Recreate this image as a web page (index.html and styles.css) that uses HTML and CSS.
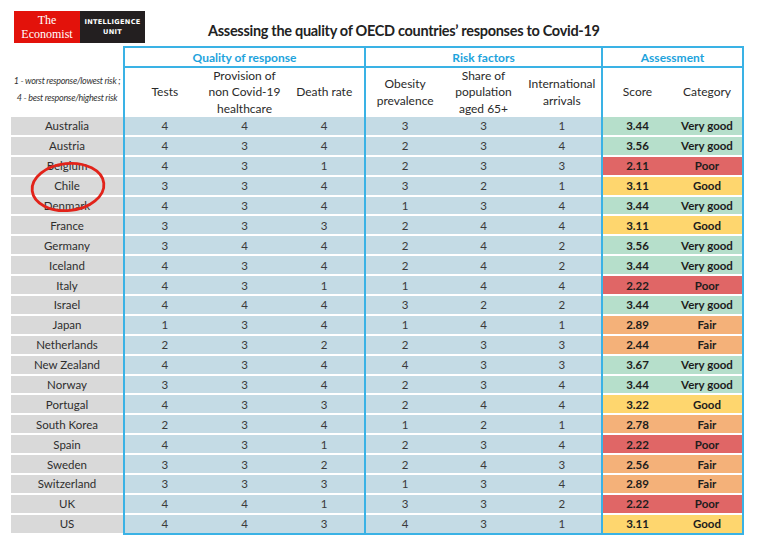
FILE: index.html
```html
<!DOCTYPE html>
<html>
<head>
<meta charset="utf-8">
<link rel="stylesheet" href="styles.css">
</head>
<body>
<div class="page">
  <div class="top">
    <div class="logo">
      <div class="logo-red"><span>The</span><span>Economist</span></div>
      <div class="logo-black"><span>INTELLIGENCE</span><span>UNIT</span></div>
    </div>
    <h1 class="title">Assessing the quality of OECD countries’ responses to Covid-19</h1>
  </div>

  <div class="table">
    <div class="labels">
      <div class="legend">
        <p>1 - worst response/lowest risk ;</p>
        <p>4 - best response/highest risk</p>
      </div>
      <div class="rows">
        <div class="row lab">Australia</div>
        <div class="row lab">Austria</div>
        <div class="row lab">Belgium</div>
        <div class="row lab">Chile</div>
        <div class="row lab">Denmark</div>
        <div class="row lab">France</div>
        <div class="row lab">Germany</div>
        <div class="row lab">Iceland</div>
        <div class="row lab">Italy</div>
        <div class="row lab">Israel</div>
        <div class="row lab">Japan</div>
        <div class="row lab">Netherlands</div>
        <div class="row lab">New Zealand</div>
        <div class="row lab">Norway</div>
        <div class="row lab">Portugal</div>
        <div class="row lab">South Korea</div>
        <div class="row lab">Spain</div>
        <div class="row lab">Sweden</div>
        <div class="row lab">Switzerland</div>
        <div class="row lab">UK</div>
        <div class="row lab">US</div>
      </div>
      <svg class="circle" width="84" height="58" viewBox="0 0 84 58">
        <ellipse cx="42" cy="29" rx="36" ry="23.5" transform="rotate(-6 42 29)" fill="none" stroke="#e2231a" stroke-width="2.8"/>
      </svg>
    </div>

    <div class="group g-quality">
      <div class="ghead">Quality of response</div>
      <div class="sub">
        <div class="c">Tests</div>
        <div class="c">Provision of<br>non Covid-19<br>healthcare</div>
        <div class="c">Death rate</div>
      </div>
      <div class="rows">
        <div class="row blue"><span>4</span><span>4</span><span>4</span></div>
        <div class="row blue"><span>4</span><span>3</span><span>4</span></div>
        <div class="row blue"><span>4</span><span>3</span><span>1</span></div>
        <div class="row blue"><span>3</span><span>3</span><span>4</span></div>
        <div class="row blue"><span>4</span><span>3</span><span>4</span></div>
        <div class="row blue"><span>3</span><span>3</span><span>3</span></div>
        <div class="row blue"><span>3</span><span>4</span><span>4</span></div>
        <div class="row blue"><span>4</span><span>3</span><span>4</span></div>
        <div class="row blue"><span>4</span><span>3</span><span>1</span></div>
        <div class="row blue"><span>4</span><span>4</span><span>4</span></div>
        <div class="row blue"><span>1</span><span>3</span><span>4</span></div>
        <div class="row blue"><span>2</span><span>3</span><span>2</span></div>
        <div class="row blue"><span>4</span><span>3</span><span>4</span></div>
        <div class="row blue"><span>3</span><span>3</span><span>4</span></div>
        <div class="row blue"><span>4</span><span>3</span><span>3</span></div>
        <div class="row blue"><span>2</span><span>3</span><span>4</span></div>
        <div class="row blue"><span>4</span><span>3</span><span>1</span></div>
        <div class="row blue"><span>3</span><span>3</span><span>2</span></div>
        <div class="row blue"><span>3</span><span>3</span><span>3</span></div>
        <div class="row blue"><span>4</span><span>4</span><span>1</span></div>
        <div class="row blue"><span>4</span><span>4</span><span>3</span></div>
      </div>
    </div>

    <div class="group g-risk">
      <div class="ghead">Risk factors</div>
      <div class="sub">
        <div class="c">Obesity<br>prevalence</div>
        <div class="c">Share of<br>population<br>aged 65+</div>
        <div class="c">International<br>arrivals</div>
      </div>
      <div class="rows">
        <div class="row blue"><span>3</span><span>3</span><span>1</span></div>
        <div class="row blue"><span>2</span><span>3</span><span>4</span></div>
        <div class="row blue"><span>2</span><span>3</span><span>3</span></div>
        <div class="row blue"><span>3</span><span>2</span><span>1</span></div>
        <div class="row blue"><span>1</span><span>3</span><span>4</span></div>
        <div class="row blue"><span>2</span><span>4</span><span>4</span></div>
        <div class="row blue"><span>2</span><span>4</span><span>2</span></div>
        <div class="row blue"><span>2</span><span>4</span><span>2</span></div>
        <div class="row blue"><span>1</span><span>4</span><span>4</span></div>
        <div class="row blue"><span>3</span><span>2</span><span>2</span></div>
        <div class="row blue"><span>1</span><span>4</span><span>1</span></div>
        <div class="row blue"><span>2</span><span>3</span><span>3</span></div>
        <div class="row blue"><span>4</span><span>3</span><span>3</span></div>
        <div class="row blue"><span>2</span><span>3</span><span>4</span></div>
        <div class="row blue"><span>2</span><span>4</span><span>4</span></div>
        <div class="row blue"><span>1</span><span>2</span><span>1</span></div>
        <div class="row blue"><span>2</span><span>3</span><span>4</span></div>
        <div class="row blue"><span>2</span><span>4</span><span>3</span></div>
        <div class="row blue"><span>1</span><span>3</span><span>4</span></div>
        <div class="row blue"><span>3</span><span>3</span><span>2</span></div>
        <div class="row blue"><span>4</span><span>3</span><span>1</span></div>
      </div>
    </div>

    <div class="group g-assess">
      <div class="ghead">Assessment</div>
      <div class="sub">
        <div class="c score">Score</div>
        <div class="c cat">Category</div>
      </div>
      <div class="rows">
        <div class="row vgood"><span class="score">3.44</span><span class="cat">Very good</span></div>
        <div class="row vgood"><span class="score">3.56</span><span class="cat">Very good</span></div>
        <div class="row poor"><span class="score">2.11</span><span class="cat">Poor</span></div>
        <div class="row good"><span class="score">3.11</span><span class="cat">Good</span></div>
        <div class="row vgood"><span class="score">3.44</span><span class="cat">Very good</span></div>
        <div class="row good"><span class="score">3.11</span><span class="cat">Good</span></div>
        <div class="row vgood"><span class="score">3.56</span><span class="cat">Very good</span></div>
        <div class="row vgood"><span class="score">3.44</span><span class="cat">Very good</span></div>
        <div class="row poor"><span class="score">2.22</span><span class="cat">Poor</span></div>
        <div class="row vgood"><span class="score">3.44</span><span class="cat">Very good</span></div>
        <div class="row fair"><span class="score">2.89</span><span class="cat">Fair</span></div>
        <div class="row fair"><span class="score">2.44</span><span class="cat">Fair</span></div>
        <div class="row vgood"><span class="score">3.67</span><span class="cat">Very good</span></div>
        <div class="row vgood"><span class="score">3.44</span><span class="cat">Very good</span></div>
        <div class="row good"><span class="score">3.22</span><span class="cat">Good</span></div>
        <div class="row fair"><span class="score">2.78</span><span class="cat">Fair</span></div>
        <div class="row poor"><span class="score">2.22</span><span class="cat">Poor</span></div>
        <div class="row fair"><span class="score">2.56</span><span class="cat">Fair</span></div>
        <div class="row fair"><span class="score">2.89</span><span class="cat">Fair</span></div>
        <div class="row poor"><span class="score">2.22</span><span class="cat">Poor</span></div>
        <div class="row good"><span class="score">3.11</span><span class="cat">Good</span></div>
      </div>
    </div>
  </div>
</div>
</body>
</html>
```

FILE: styles.css
```css
* { box-sizing: border-box; }
html, body { margin: 0; padding: 0; background: #fff; }
body { font-family: Lato, "Open Sans", sans-serif; color: #2b2b2b; }

.page { padding-top: 11px; }

.top { display: flex; align-items: flex-start; height: 35px; }

.logo { display: flex; margin-left: 14px; height: 32px; }
.logo-red {
  width: 66px; background: #e3120b; color: #fff;
  display: flex; flex-direction: column; align-items: center; justify-content: center;
  font-family: "Liberation Serif", "DejaVu Serif", serif; font-size: 12px; line-height: 14px;
}
.logo-black {
  width: 65px; background: #231f20; color: #fff;
  display: flex; flex-direction: column; align-items: center; justify-content: center;
  font-family: "DejaVu Sans", sans-serif; font-weight: bold; font-size: 6.6px; line-height: 10px; letter-spacing: 0.3px;
}

.title {
  margin: 11px 0 0 63px; font-size: 14.5px; font-weight: 700; line-height: 18px; color: #222;
  letter-spacing: -0.3px;
}

.table { display: flex; margin-left: 11px; }

.labels { width: 112px; position: relative; }
.legend {
  height: 71px; display: flex; flex-direction: column; justify-content: center; align-items: center;
  font-style: italic; font-size: 9px; color: #333; letter-spacing: -0.3px; padding-top: 14px; gap: 6px;
}
.legend p { margin: 0; }

.rows { display: flex; flex-direction: column; gap: 2px; }
.row { height: 17.9px; display: flex; align-items: center; font-size: 11.5px; }
.lab { background: #d9d9d9; justify-content: center; color: #2e2e2e; font-size: 11.5px; }

.circle { position: absolute; left: 15px; top: 112px; }

.group { border: 2px solid #3ab2e5; }
.g-quality { width: 243px; }
.g-risk { width: 239px; margin-left: -2px; }
.g-assess { width: 143px; margin-left: -2px; }

.ghead {
  height: 20px; border-bottom: 2px solid #3ab2e5; display: flex; align-items: center; justify-content: center;
  color: #1ea3dc; font-weight: 700; font-size: 12px;
}
.sub { height: 49px; display: flex; align-items: center; }
.sub .c { flex: 1; text-align: center; font-size: 12px; line-height: 16.5px; color: #2a2a2a; }

.row span { flex: 1; text-align: center; }
.blue { background: #c4dbe5; color: #3a3a3a; }

.row .score, .sub .c.score { flex: 0 0 69px; }
.cat { flex: 1; }
.g-assess .row { font-weight: 700; color: #1d1d1d; font-size: 11.5px; }

.vgood { background: #b6dfcb; }
.good { background: #fed66e; }
.fair { background: #f4b179; }
.poor { background: #e06666; }
```
